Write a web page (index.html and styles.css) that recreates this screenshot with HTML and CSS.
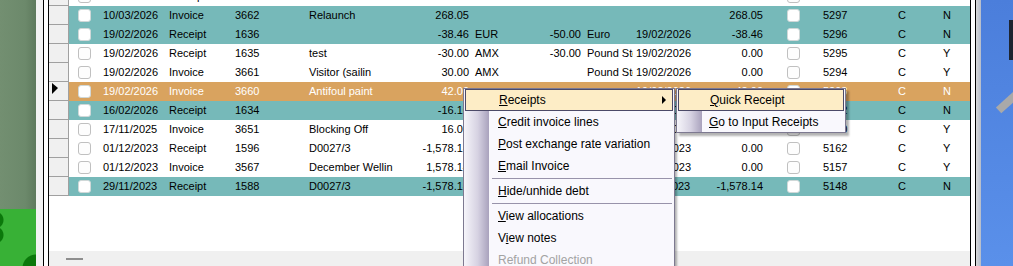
FILE: index.html
```html
<!DOCTYPE html>
<html>
<head>
  <title>Customer Transactions</title>
  <link rel="stylesheet" href="styles.css">
</head>
<body>
  <div class="desk-left"></div>
  <div class="desk-gap"></div>

  <div class="frame">
    <div class="pane">
      <div class="grid" id="grid"></div>
      <div class="pane-empty"></div>
      <div class="pane-foot"><span class="grip"></span></div>
    </div>
  </div>

  <div class="desk-strip"></div>
  <div class="desk-right">
    <div class="desk-icon"></div>
    <div class="desk-bar"></div>
  </div>

  <!-- context menu -->
  <div class="menu main-menu">
    <div class="item hot"><span><u>R</u>eceipts</span><span class="arrow"></span></div>
    <div class="item"><span><u>C</u>redit invoice lines</span></div>
    <div class="item"><span><u>P</u>ost exchange rate variation</span></div>
    <div class="item"><span><u>E</u>mail Invoice</span></div>
    <div class="sep"></div>
    <div class="item"><span><u>H</u>ide/unhide debt</span></div>
    <div class="sep"></div>
    <div class="item"><span><u>V</u>iew allocations</span></div>
    <div class="item"><span>V<u>i</u>ew notes</span></div>
    <div class="item disabled"><span>Refund Collection</span></div>
  </div>

  <div class="menu sub-menu">
    <div class="item hot"><span><u>Q</u>uick Receipt</span></div>
    <div class="item"><span><u>G</u>o to Input Receipts</span></div>
  </div>

  <script>
    // date, type, no, description, amount, cur, foreign amount, currency, date, balance, ref, status, hidden
    var rows = [
      ["", "18/03/2026", "Receipt", "1637", "", "-20.00", "", "", "", "18/03/2026", "0.00", "5298", "C", "Y"],
      ["teal", "10/03/2026", "Invoice", "3662", "Relaunch", "268.05", "", "", "", "", "268.05", "5297", "C", "N"],
      ["teal", "19/02/2026", "Receipt", "1636", "", "-38.46", "EUR", "-50.00", "Euro", "19/02/2026", "-38.46", "5296", "C", "N"],
      ["", "19/02/2026", "Receipt", "1635", "test", "-30.00", "AMX", "-30.00", "Pound Sterling", "19/02/2026", "0.00", "5295", "C", "Y"],
      ["", "19/02/2026", "Invoice", "3661", "Visitor (sailin", "30.00", "AMX", "", "Pound Sterling", "19/02/2026", "0.00", "5294", "C", "Y"],
      ["sel", "19/02/2026", "Invoice", "3660", "Antifoul paint", "42.00", "", "", "", "19/02/2026", "42.00", "5293", "C", "N"],
      ["teal", "16/02/2026", "Receipt", "1634", "", "-16.10", "", "", "", "16/02/2026", "-16.10", "5292", "C", "N"],
      ["", "17/11/2025", "Invoice", "3651", "Blocking Off", "16.00", "", "", "", "17/11/2025", "0.00", "5170", "C", "Y"],
      ["", "01/12/2023", "Receipt", "1596", "D0027/3", "-1,578.14", "", "", "", "01/12/2023", "0.00", "5162", "C", "Y"],
      ["", "01/12/2023", "Invoice", "3567", "December Wellin", "1,578.14", "", "", "", "01/12/2023", "0.00", "5157", "C", "Y"],
      ["teal", "29/11/2023", "Receipt", "1588", "D0027/3", "-1,578.14", "", "", "", "29/11/2023", "-1,578.14", "5148", "C", "N"]
    ];

    var grid = document.getElementById("grid");

    function cell(text, cls) {
      return '<div class="cell ' + (cls || '') + '">' + text + '</div>';
    }

    rows.forEach(function(r) {
      var html = '<div class="rh">' + (r[0] == "sel" ? '<span class="pointer"></span>' : '') + '</div>';
      html += '<div class="cell cb-cell"><span class="cb"></span></div>';
      html += cell(r[1]) + cell(r[2]) + cell(r[3]) + cell(r[4]);
      html += cell(r[5], "num") + cell(r[6]) + cell(r[7], "num") + cell(r[8]);
      html += cell(r[9]) + cell(r[10], "num");
      html += '<div class="cell cb-cell"><span class="cb"></span></div>';
      html += cell(r[11], "ref") + cell(r[12]) + cell(r[13]);

      var row = document.createElement("div");
      row.className = "row " + r[0];
      row.innerHTML = html;
      grid.appendChild(row);
    });
  </script>
</body>
</html>
```

FILE: styles.css
```css
* {
  box-sizing: border-box;
}
body {
  margin: 0;
  width: 1013px;
  height: 266px;
  overflow: hidden;
  display: flex;
  position: relative;
  font-family: "Liberation Sans", Arial, sans-serif;
  font-size: 11px;
  color: #000;
}

/* desktop behind the window */
.desk-left {
  width: 36px;
  background:
    radial-gradient(circle at 36px 268px, #0b780b 13px, transparent 14px),
    radial-gradient(circle at -5px 220px, #0b780b 8px, transparent 9px),
    radial-gradient(circle at -5px 235px, #0b780b 8px, transparent 9px),
    linear-gradient(to bottom, transparent 209px, #38b136 209px),
    linear-gradient(to right, #738f71, #6c896b 70%, #5e7a5d);
}
.desk-gap {
  width: 7px;
  background: #f3f3f3;
}
.desk-strip {
  width: 5px;
  background: linear-gradient(to right, #d9d9d9, #b4bccb);
}
.desk-right {
  width: 32px;
  position: relative;
  overflow: hidden;
  background: linear-gradient(to bottom, #4b7edb, #5a90ea);
}
.desk-icon {
  position: absolute;
  right: 0;
  top: 20px;
  width: 4px;
  height: 40px;
  background: #1d2430;
}
.desk-bar {
  position: absolute;
  left: 14px;
  top: 97px;
  width: 28px;
  height: 8px;
  background: #a9a9a9;
  transform: rotate(-42deg);
}

/* window */
.frame {
  width: 933px;
  padding: 0 4px;
  background: #fff;
  border-left: 1px solid #000;
  border-right: 1px solid #000;
}
.pane {
  height: 100%;
  display: flex;
  flex-direction: column;
  border-left: 1px solid #000;
  border-right: 1px solid #000;
}
.grid {
  overflow: hidden;
}
.pane-empty {
  flex: 1;
  background: #fff;
}
.pane-foot {
  height: 15px;
  background: #f0f0f0;
  padding: 7px 0 0 17px;
}
.grip {
  display: block;
  width: 17px;
  height: 2px;
  background: #8e8e8e;
}

/* grid rows */
.row {
  display: grid;
  grid-template-columns: 20px 31px 66px 66px 74px 94px 72px 48px 64px 49px 67px 66px 55px 74px 45px 30px;
  height: 19px;
  line-height: 19px;
  background: #fff;
}
.row:first-child {
  margin-top: -13px;
}
.row.teal {
  background: #76b9b9;
}
.row.sel {
  background: #d9a35f;
  color: #fff;
}
.rh {
  background: #f0f0f0;
  border-right: 1px solid #a0a0a0;
  border-bottom: 1px solid #a0a0a0;
  padding: 1px 0 0 3px;
}
.pointer {
  display: block;
  width: 0;
  height: 0;
  border-left: 6px solid #000;
  border-top: 5px solid transparent;
  border-bottom: 6px solid transparent;
}
.cell {
  padding: 0 3px;
  white-space: nowrap;
  overflow: hidden;
}
.cell.num {
  text-align: right;
}
.cell.ref {
  padding-left: 2px;
}
.cb-cell {
  display: flex;
  align-items: center;
  justify-content: center;
}
.cb {
  width: 13px;
  height: 13px;
  border: 1px solid #c0c0c0;
  border-radius: 3px;
  background: #fdfdfd;
}
.row.teal .cb,
.row.sel .cb {
  background: #fff;
  border-color: #d0d8d8;
}

/* popup menus */
.menu {
  position: absolute;
  font-size: 12px;
  color: #000;
  border: 1px solid #7d7990;
  box-shadow: 2px 2px 2px rgba(0, 0, 0, 0.3);
  background:
    linear-gradient(to right, #f6f5fa, #d6d2e2 55%, #a9a2bd) 0 0 / 25px 100% no-repeat,
    #f9f8fd;
}
.main-menu {
  left: 463px;
  top: 88px;
  width: 212px;
  height: 200px;
}
.sub-menu {
  left: 676px;
  top: 88px;
  width: 170px;
  height: 45px;
  box-shadow: 3px 3px 2px rgba(0, 0, 0, 0.3);
}
.item {
  height: 22px;
  display: flex;
  align-items: center;
  justify-content: space-between;
  padding: 0 8px 0 34px;
  margin: 0 2px 0 0;
}
.sub-menu .item {
  padding-left: 32px;
}
.item.hot {
  margin: 0 1px 0 1px;
  padding-left: 33px;
  padding-right: 6px;
  background: #fdedc6;
  border: 1px solid #4c4a68;
}
.sub-menu .item.hot {
  padding-left: 31px;
}
.item.disabled {
  color: #a3a3a3;
}
.item u {
  text-underline-offset: 1px;
}
.arrow {
  width: 0;
  height: 0;
  border-left: 4px solid #000;
  border-top: 4px solid transparent;
  border-bottom: 4px solid transparent;
}
.sep {
  height: 2px;
  margin: 1px 2px 0 28px;
  border-top: 1px solid #9893aa;
}
```
